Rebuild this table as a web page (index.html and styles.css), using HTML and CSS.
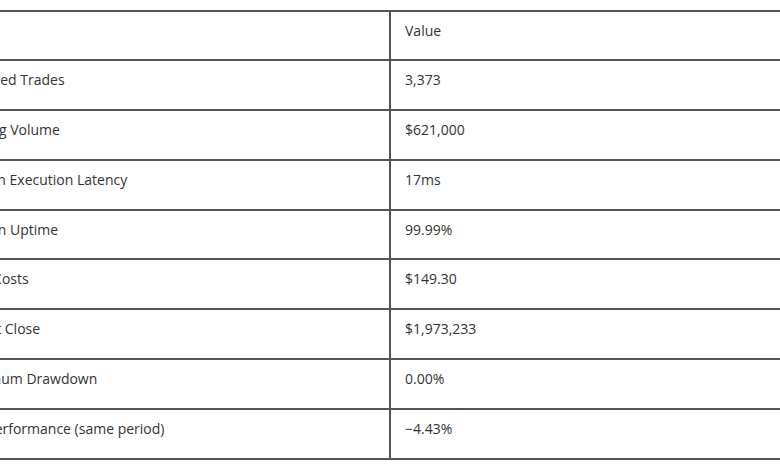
FILE: index.html
```html
<!DOCTYPE html>
<html lang="en">
<head>
<meta charset="utf-8">
<title>Metrics</title>
<link rel="stylesheet" href="styles.css">
</head>
<body>
<div class="viewport">
  <div class="table">
    <div class="row"><div class="cell label">Metric</div><div class="cell value">Value</div></div>
    <div class="row"><div class="cell label">Executed Trades</div><div class="cell value">3,373</div></div>
    <div class="row"><div class="cell label">Trading Volume</div><div class="cell value">$621,000</div></div>
    <div class="row"><div class="cell label">Median Execution Latency</div><div class="cell value">17ms</div></div>
    <div class="row"><div class="cell label">Session Uptime</div><div class="cell value">99.99%</div></div>
    <div class="row"><div class="cell label">Total Costs</div><div class="cell value">$149.30</div></div>
    <div class="row"><div class="cell label">NAV at Close</div><div class="cell value">$1,973,233</div></div>
    <div class="row"><div class="cell label">Maximum Drawdown</div><div class="cell value">0.00%</div></div>
    <div class="row"><div class="cell label">BTC Performance (same period)</div><div class="cell value">&minus;4.43%</div></div>
  </div>
</div>
</body>
</html>
```

FILE: styles.css
```css
html, body {
  margin: 0;
  padding: 0;
  background: #ffffff;
}

.viewport {
  width: 780px;
  height: 470px;
  overflow: hidden;
  padding-top: 9.5px;
  box-sizing: border-box;
}

.table {
  margin-left: -58px;
  width: 1000px;
  font-family: "Open Sans", "Noto Sans", sans-serif;
  font-size: 14px;
  line-height: 20px;
  color: #333333;
  border-bottom: 2px solid #555555;
}

.row {
  display: grid;
  grid-template-columns: 447px 1fr;
  height: 49.8px;
  box-sizing: border-box;
  border-top: 2px solid #555555;
}

.cell {
  padding: 9px 15px 0 15px;
  white-space: nowrap;
}

.value {
  border-left: 2px solid #555555;
  padding-left: 14px;
}
```
